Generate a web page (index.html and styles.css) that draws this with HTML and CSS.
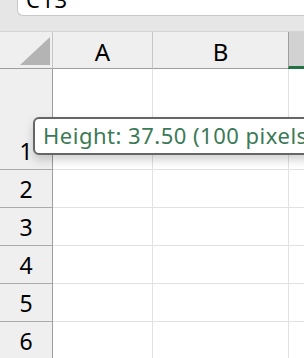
FILE: index.html
```html
<!DOCTYPE html>
<html lang="en">
  <head>
    <meta charset="UTF-8" />
    <title>Sheet</title>
    <link rel="stylesheet" href="styles.css">
  </head>
  <body>
    <div class="toolbar">
      <div class="namebox"><span>C13</span></div>
    </div>

    <div class="sheet">
      <div class="corner">
        <svg width="53" height="37" viewBox="0 0 53 37">
          <polygon points="20,33 50,33 50,5" fill="#b4b4b4" />
        </svg>
      </div>
      <div class="col-head">A</div>
      <div class="col-head">B</div>
      <div class="col-head selected"></div>

      <div class="row-head">1</div>
      <div class="cell"></div><div class="cell"></div><div class="cell"></div>
      <div class="row-head">2</div>
      <div class="cell"></div><div class="cell"></div><div class="cell"></div>
      <div class="row-head">3</div>
      <div class="cell"></div><div class="cell"></div><div class="cell"></div>
      <div class="row-head">4</div>
      <div class="cell"></div><div class="cell"></div><div class="cell"></div>
      <div class="row-head">5</div>
      <div class="cell"></div><div class="cell"></div><div class="cell"></div>
      <div class="row-head">6</div>
      <div class="cell"></div><div class="cell"></div><div class="cell"></div>

      <div class="tooltip">Height: 37.50 (100 pixels)</div>
    </div>
  </body>
</html>
```

FILE: styles.css
```css
* {
  box-sizing: border-box;
}
body {
  margin: 0;
  width: 304px;
  height: 358px;
  overflow: hidden;
  font-family: "Noto Sans", "Open Sans", sans-serif;
  background: #ffffff;
  color: #000;
}
.toolbar {
  height: 32px;
  background: #e6e6e6;
  padding-left: 17px;
  border-bottom: 1px solid #d4d4d4;
}
.namebox {
  height: 16px;
  background: #ffffff;
  border-left: 1px solid #c8c8c8;
  border-bottom: 1px solid #c8c8c8;
  border-bottom-left-radius: 6px;
  overflow: hidden;
  display: flex;
  align-items: flex-end;
  padding-left: 8px;
}
.namebox span {
  font-size: 22px;
  line-height: 22px;
  margin-bottom: 5px;
  letter-spacing: 1px;
}
.sheet {
  position: relative;
  display: grid;
  grid-template-columns: 53px 100px 136px 40px;
  grid-template-rows: 37px 101px repeat(5, 38px);
}
.corner {
  background: #efefef;
  border-right: 1px solid #c6c6c6;
  border-bottom: 1px solid #9e9e9e;
}
.corner svg {
  display: block;
}
.col-head {
  background: #efefef;
  border-right: 1px solid #c6c6c6;
  border-bottom: 1px solid #9e9e9e;
  display: flex;
  align-items: center;
  justify-content: center;
  font-size: 24px;
  padding-top: 3px;
}
.col-head.selected {
  background: #d2d2d2;
  border-left: 1px solid #9e9e9e;
  margin-left: -1px;
  border-bottom: 3px solid #217346;
}
.row-head {
  background: #efefef;
  border-right: 1px solid #9e9e9e;
  border-bottom: 1px solid #ababab;
  display: flex;
  align-items: flex-end;
  justify-content: center;
  font-size: 23px;
  line-height: 23px;
  padding-bottom: 6px;
}
.cell {
  border-right: 1px solid #e1e1e1;
  border-bottom: 1px solid #e1e1e1;
}
.tooltip {
  position: absolute;
  left: 33px;
  top: 85px;
  height: 38px;
  width: 320px;
  background: #ffffff;
  border: 2px solid #666666;
  border-radius: 6px;
  box-shadow: 0 5px 10px rgba(0, 0, 0, 0.18);
  color: #3b7a57;
  font-size: 22px;
  line-height: 32px;
  letter-spacing: 0.5px;
  padding-left: 8px;
  white-space: nowrap;
}
```
